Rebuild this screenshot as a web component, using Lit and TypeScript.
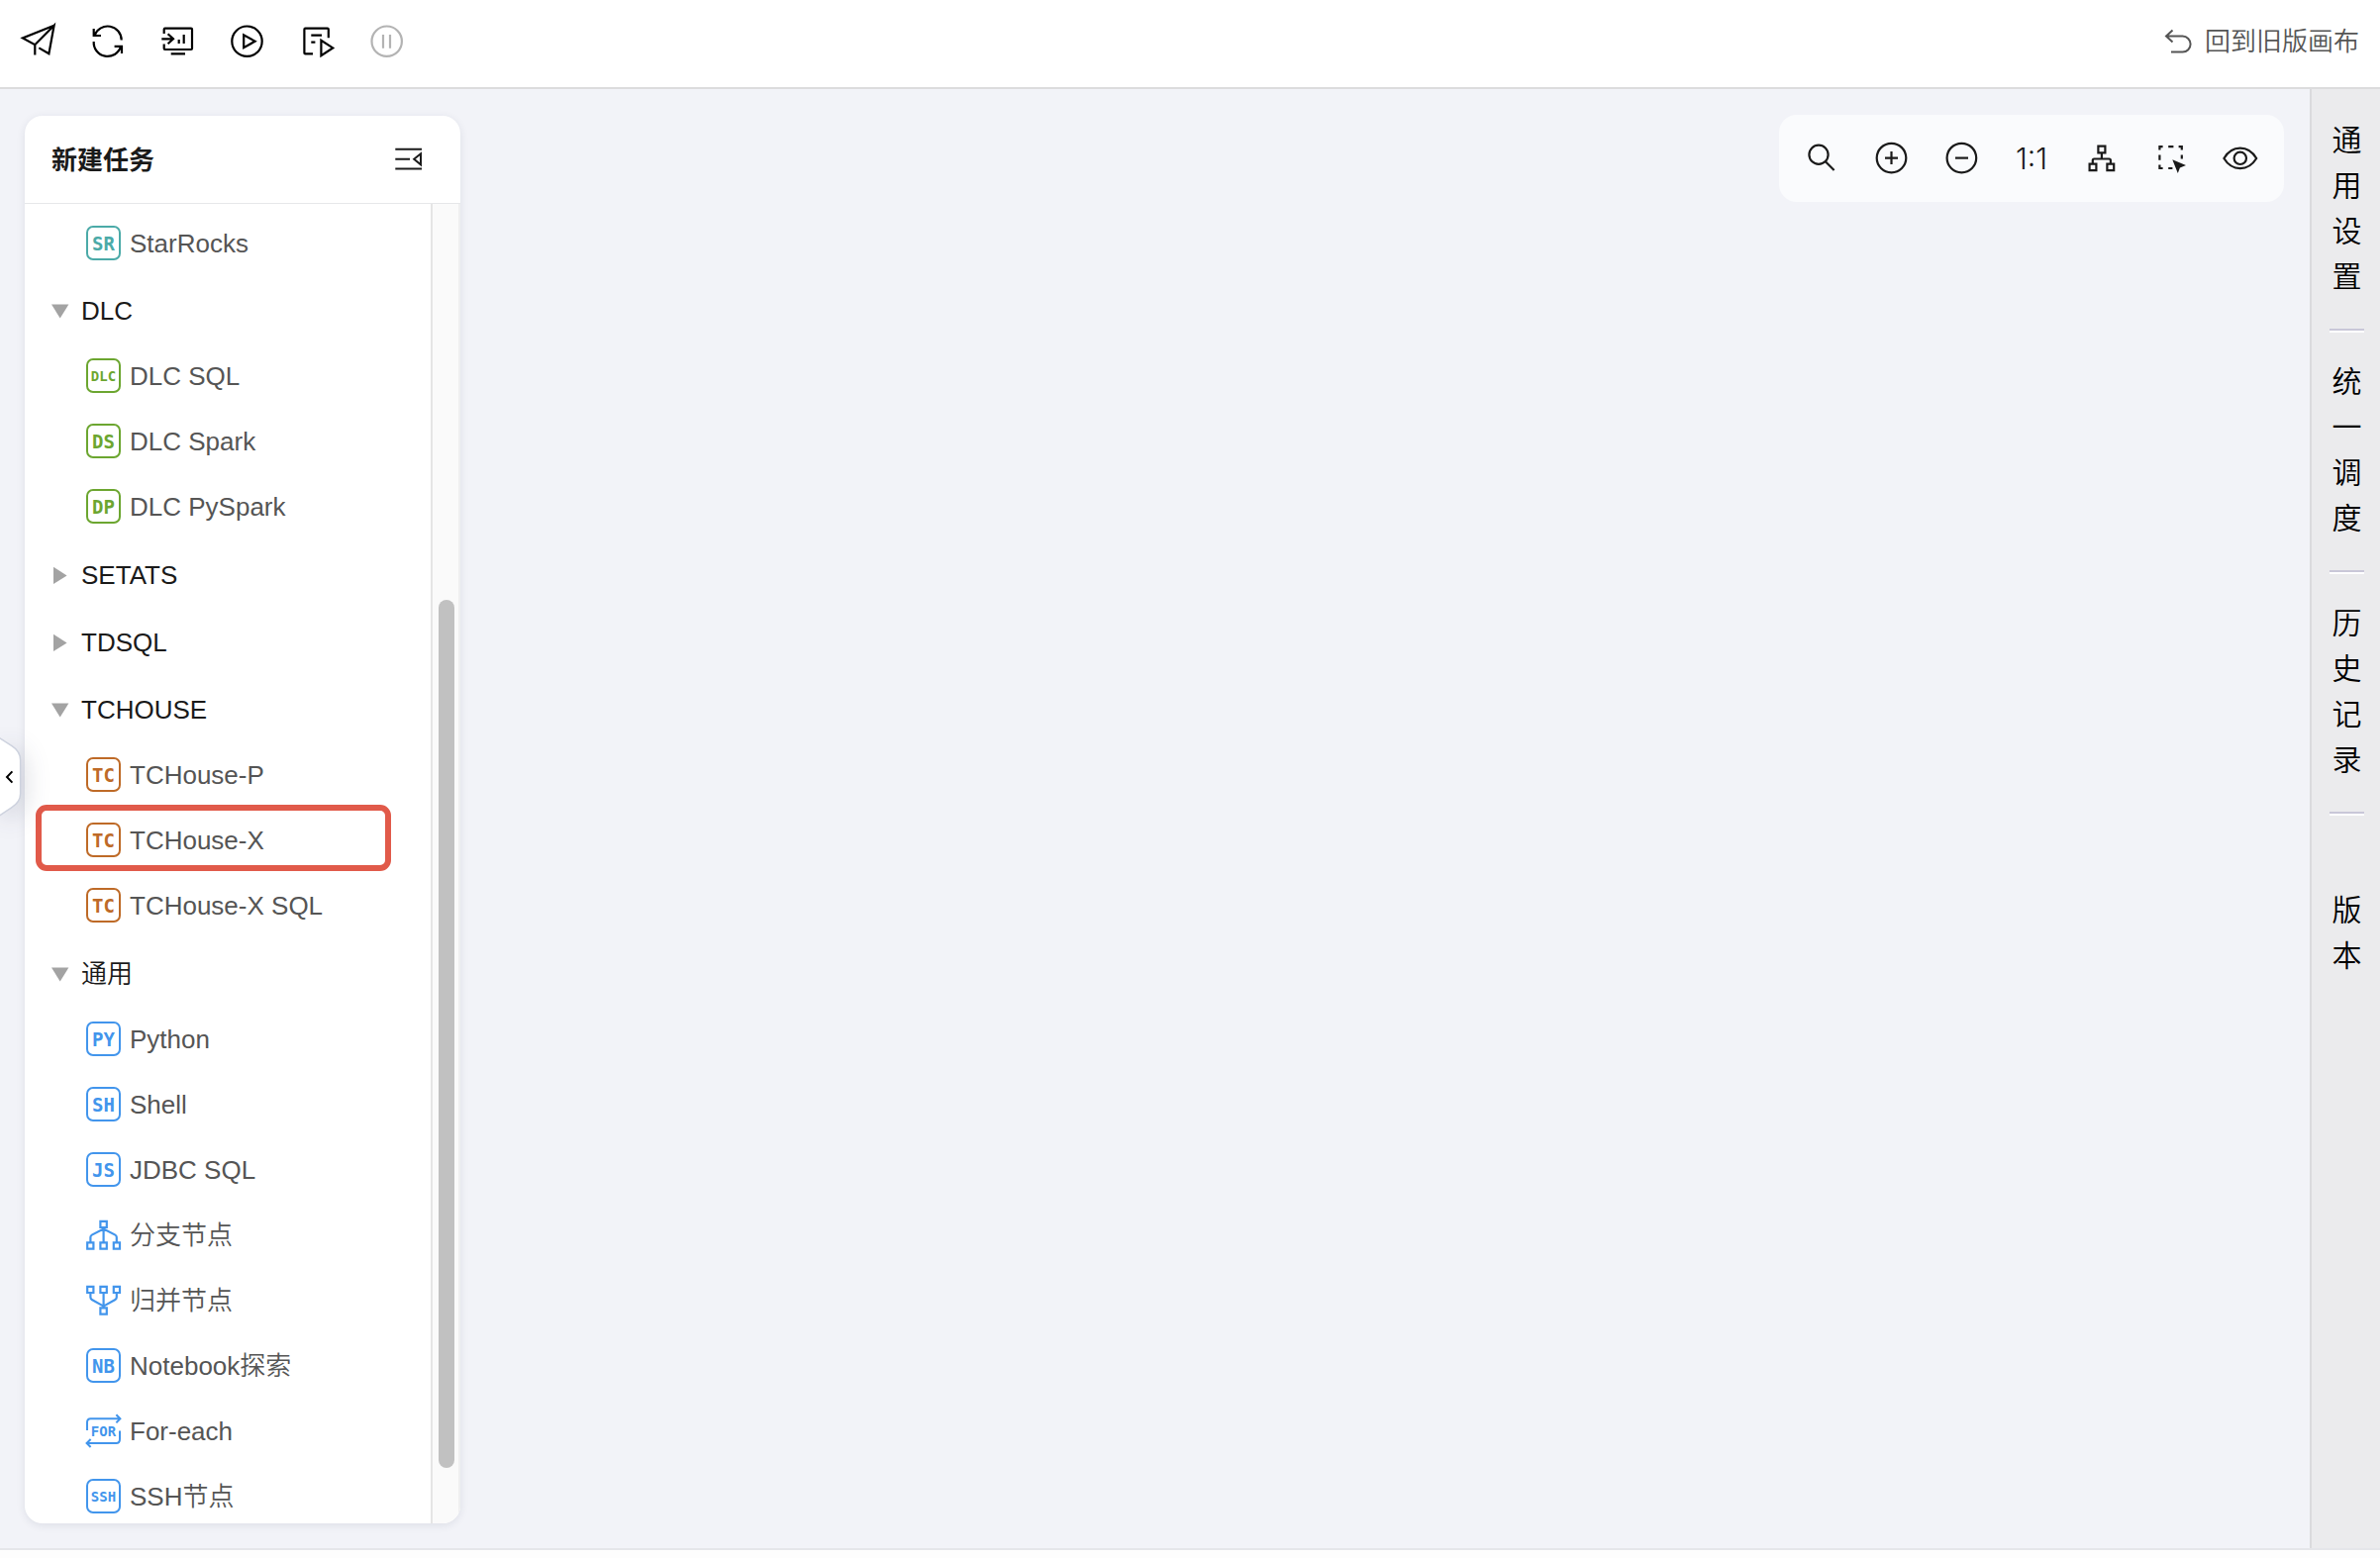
import { LitElement, html, svg, css, type TemplateResult } from "lit";
import { customElement, property, state } from "lit/decorators.js";

type Tone = "teal" | "green" | "orange" | "blue";

interface Task {
  label: string;
  tone: Tone;
  badge?: string;
  glyph?: "branch" | "merge" | "loop";
  marked?: boolean;
}

interface Group {
  label: string;
  open: boolean;
  tasks: Task[];
}

const ICONS: Record<string, TemplateResult> = {
  send: svg`<path d="M33.6 1.8 1.9 14.4 14.3 21.2 33.6 1.8 28.4 30.2 18.3 24.4M14.3 21.2V31.6"/>`,
  refresh: svg`<path d="M3.7 5V12H11M4.6 11.6A14 14 0 0 1 31.7 16.5M3.7 18A14 14 0 0 0 31 23.2M32 30V22.8H24.6"/>`,
  monitor: svg`<path d="M4.7 10V5.6Q4.7 4.7 5.6 4.7H32Q33 4.7 33 5.6V25Q33 26 32 26H5.6Q4.7 26 4.7 25V20.6M2.3 15.3H14M8.6 10.3 14 15.3 8.6 20.2M19.7 16V20M24.7 11V20M11.7 30.4H26"/>`,
  play: svg`<circle cx="18.5" cy="17.7" r="15.2"/><path d="M15.2 11.3V24.2L26.6 17.7Z"/>`,
  script: svg`<path d="M15 30.4H7.4Q6.4 30.4 6.4 29.4V5.7Q6.4 4.7 7.4 4.7H29.8Q30.8 4.7 30.8 5.7V14.3M13.3 11.7H24M13.3 18.7H17.4M23.4 16.8V32.2L35.2 24.4Z"/>`,
  pause: svg`<circle cx="19.7" cy="17.7" r="15.2"/><path d="M16 11V24.8M23 11V24.8"/>`,
  search: svg`<circle cx="16" cy="14.2" r="9.6"/><path d="M22.6 21 31.6 30"/>`,
  plus: svg`<circle cx="18.5" cy="17.6" r="14.8"/><path d="M12 17.6H25M18.5 11.1V24.1"/>`,
  minus: svg`<circle cx="18.4" cy="17.6" r="14.8"/><path d="M12 17.6H25"/>`,
  tree: svg`<path d="M14.4 5.6H21.4V12.4H14.4ZM5.6 23.6H12.4V30.2H5.6ZM23.4 23.6H30.2V30.2H23.4ZM17.9 12.4V18.5M8.8 23.6V20Q8.8 18.5 10.3 18.5H25.4Q26.9 18.5 26.9 20V23.6"/>`,
  select: svg`<path d="M5.4 9.5V6.2H8.6M14.2 6.2H19.4M24.6 6.2H27.8V9.5M5.4 14.4V19.8M5.4 24.6V28H8.6M14.2 28H18.4M27.8 14.4V18.6"/><path class="solid" d="M18.3 19.3 32 25 25.9 27.4 23.8 33Z"/>`,
  eye: svg`<path d="M-.6 18C7.5 4.2 24 4.2 32.2 18 24 31.4 7.5 31.4-.6 18Z"/><circle cx="15.8" cy="17.8" r="6.2"/>`,
};

@customElement("line-icon")
export class LineIcon extends LitElement {
  @property() name = "";

  static styles = css`
    :host {
      display: block;
      width: 36px;
      height: 36px;
    }
    .icon {
      display: block;
      width: 36px;
      height: 36px;
      overflow: visible;
      fill: none;
      stroke: currentColor;
      stroke-width: 2.2;
    }
    .solid {
      fill: currentColor;
      stroke: none;
    }
  `;

  render() {
    return html`<svg class="icon" viewBox="0 0 36 36" aria-hidden="true">${ICONS[this.name]}</svg>`;
  }
}

@customElement("task-icon")
export class TaskIcon extends LitElement {
  @property({ attribute: false }) task!: Task;

  static styles = css`
    :host {
      display: block;
      width: 36px;
      height: 36px;
    }
    .icon {
      display: block;
      overflow: visible;
      fill: none;
      stroke: currentColor;
      stroke-width: 2;
    }
    .nodes {
      stroke-width: 2.2;
    }
    .code {
      fill: currentColor;
      stroke: none;
      font-family: "DejaVu Sans Mono", monospace;
      font-weight: 700;
      font-size: 19px;
      text-anchor: middle;
    }
    .code.small {
      font-size: 14px;
    }
    .teal {
      color: #4baaa8;
    }
    .green {
      color: #6ca630;
    }
    .orange {
      color: #be6a27;
    }
    .blue {
      color: #4295ec;
    }
  `;

  private shape() {
    const { badge = "", glyph } = this.task;
    if (glyph === "branch") {
      return svg`<path class="nodes" d="M14.4 3.8H20.8V10H14.4ZM1.2 25.4H7.4V31.6H1.2ZM14.4 25.4H20.8V31.6H14.4ZM27.8 25.4H34V31.6H27.8ZM17.6 10V25.4M4.4 25.4V20Q4.4 18.4 5.8 17.6L17.6 11.6 29.4 17.6Q30.8 18.4 30.8 20V25.4"/>`;
    }
    if (glyph === "merge") {
      return svg`<path class="nodes" d="M1.2 3.8H7.4V10H1.2ZM14.4 3.8H20.8V10H14.4ZM27.8 3.8H34V10H27.8ZM14.4 25.4H20.8V31.6H14.4ZM17.6 10V25.4M4.4 10V14.6Q4.4 16.2 5.8 17L17.6 23.6 29.4 17Q30.8 16.2 30.8 14.6V10"/>`;
    }
    if (glyph === "loop") {
      return svg`<path d="M1 17V9Q1 5.3 4.6 5.3H34M30.4 1.2 34.4 5.3 30.4 9.4M34 17.4V26Q34 30 30.4 30H1M4.6 26 .6 30 4.6 34"/>
        <text class="code small" x="17.5" y="23">${badge}</text>`;
    }
    const small = badge.length > 2;
    return svg`<rect x="1" y="1" width="33" height="33" rx="6"/>
      <text class=${small ? "code small" : "code"} x="17.5" y=${small ? 23 : 25}>${badge}</text>`;
  }

  render() {
    return html`<svg class="icon ${this.task.tone}" width="36" height="36" viewBox="0 0 36 36" aria-hidden="true">
      ${this.shape()}
    </svg>`;
  }
}

@customElement("task-panel")
export class TaskPanel extends LitElement {
  @state() private groups: Group[] = [
    { label: "DLC", open: true, tasks: [
      { label: "DLC SQL", tone: "green", badge: "DLC" },
      { label: "DLC Spark", tone: "green", badge: "DS" },
      { label: "DLC PySpark", tone: "green", badge: "DP" },
    ] },
    { label: "SETATS", open: false, tasks: [] },
    { label: "TDSQL", open: false, tasks: [] },
    { label: "TCHOUSE", open: true, tasks: [
      { label: "TCHouse-P", tone: "orange", badge: "TC" },
      { label: "TCHouse-X", tone: "orange", badge: "TC", marked: true },
      { label: "TCHouse-X SQL", tone: "orange", badge: "TC" },
    ] },
    { label: "通用", open: true, tasks: [
      { label: "Python", tone: "blue", badge: "PY" },
      { label: "Shell", tone: "blue", badge: "SH" },
      { label: "JDBC SQL", tone: "blue", badge: "JS" },
      { label: "分支节点", tone: "blue", glyph: "branch" },
      { label: "归并节点", tone: "blue", glyph: "merge" },
      { label: "Notebook探索", tone: "blue", badge: "NB" },
      { label: "For-each", tone: "blue", badge: "FOR", glyph: "loop" },
      { label: "SSH节点", tone: "blue", badge: "SSH" },
    ] },
  ];

  static styles = css`
    :host {
      display: flex;
      flex-direction: column;
      width: 440px;
      background: #fff;
      border-radius: 18px;
      overflow: hidden;
      box-shadow: 0 2px 8px rgba(40, 50, 80, 0.1);
    }
    button {
      font: inherit;
      color: inherit;
      background: none;
      border: 0;
      padding: 0;
      cursor: pointer;
      text-align: left;
    }
    .head {
      display: flex;
      align-items: center;
      justify-content: space-between;
      height: 88px;
      flex: none;
      padding: 0 38px 0 27px;
      border-bottom: 1px solid #e6e7e9;
    }
    .title {
      margin: 0;
      padding-top: 2px;
      font-size: 26px;
      line-height: 36px;
      font-weight: 700;
      color: #1a1a1a;
    }
    .fold {
      display: block;
      fill: none;
      stroke: #1a1a1a;
      stroke-width: 2;
    }
    .body {
      display: flex;
      flex: 1;
      min-height: 0;
    }
    .tree {
      flex: 1;
      overflow: hidden;
      padding-top: 7px;
    }
    .list {
      list-style: none;
      margin: 0;
      padding: 0;
    }
    .group + .list {
      padding-bottom: 1px;
    }
    .item {
      position: relative;
    }
    .task {
      display: flex;
      align-items: center;
      gap: 8px;
      width: 100%;
      height: 66px;
      padding-left: 62px;
      color: #555;
    }
    .marked::after {
      content: "";
      position: absolute;
      inset: -3px 40px 2px 11px;
      border: 6px solid #e15a4a;
      border-radius: 11px;
      pointer-events: none;
    }
    .group {
      display: flex;
      align-items: center;
      gap: 12px;
      width: 100%;
      height: 68px;
      padding: 2px 0 0 27px;
      color: #1a1a1a;
    }
    .caret {
      fill: #a3a3a3;
    }
    .track {
      display: flex;
      flex-direction: column;
      align-items: center;
      width: 24px;
      padding-left: 2px;
      background: #fafafa;
      border-left: 2px solid #e5e5e5;
      border-right: 2px solid #efeff0;
    }
    .before {
      flex: 400;
    }
    .thumb {
      flex: 877;
      width: 16px;
      border-radius: 8px;
      background: #c1c1c1;
    }
    .after {
      flex: 56;
    }
  `;

  private toggle(index: number) {
    this.groups = this.groups.map((g, i) => (i === index ? { ...g, open: !g.open } : g));
  }

  private list(tasks: Task[]) {
    return html`<ul class="list">
      ${tasks.map(
        (t) => html`<li class="item ${t.marked ? "marked" : ""}">
          <button class="task"><task-icon .task=${t}></task-icon><span>${t.label}</span></button>
        </li>`,
      )}
    </ul>`;
  }

  render() {
    return html`
      <header class="head">
        <h2 class="title">新建任务</h2>
        <button aria-label="收起">
          <svg class="fold" width="28" height="24" viewBox="0 0 28 24">
            <path d="M.3 1.7H27M.3 11.8H15M.3 21.5H27M26 6.3V17.3L19.2 11.8Z" />
          </svg>
        </button>
      </header>
      <div class="body">
        <nav class="tree">
          ${this.list([{ label: "StarRocks", tone: "teal", badge: "SR" }])}
          ${this.groups.map(
            (g, i) => html`
              <button class="group" aria-expanded=${g.open} @click=${() => this.toggle(i)}>
                <svg class="caret" width="18" height="18" viewBox="0 0 18 18" aria-hidden="true">
                  <path d=${g.open ? "M0 2.4H17.4L8.7 16.6Z" : "M2 .8V18L15.6 9.4Z"} />
                </svg>
                <span>${g.label}</span>
              </button>
              ${g.open ? this.list(g.tasks) : ""}
            `,
          )}
        </nav>
        <div class="track">
          <div class="before"></div>
          <div class="thumb"></div>
          <div class="after"></div>
        </div>
      </div>
    `;
  }
}

@customElement("app-root")
export class AppRoot extends LitElement {
  static styles = css`
    :host {
      display: flex;
      flex-direction: column;
      height: 100vh;
      box-sizing: border-box;
      background: #fdfdfd;
      font-family: "Liberation Sans", "Noto Sans CJK SC", sans-serif;
      font-size: 26px;
      font-weight: 350;
      line-height: 36px;
      color: #1a1a1a;
    }
    button {
      font: inherit;
      color: inherit;
      background: none;
      border: 0;
      padding: 0;
      cursor: pointer;
    }
    .topbar {
      display: flex;
      align-items: center;
      justify-content: space-between;
      height: 84px;
      flex: none;
      padding: 0 21px 4px 21px;
      background: #fff;
      border-bottom: 2px solid #dcdcdd;
    }
    .actions {
      display: flex;
      gap: 34px;
      color: #000;
    }
    .actions button:disabled {
      color: #b3b3b3;
    }
    .back {
      display: flex;
      align-items: center;
      gap: 13px;
      color: #555;
      text-decoration: none;
    }
    .back-icon {
      fill: none;
      stroke: currentColor;
      stroke-width: 2;
    }
    .main {
      position: relative;
      display: flex;
      flex: 1;
      min-height: 0;
      background: #f2f3f8;
      border-bottom: 2px solid #e5e6ea;
      margin-bottom: 8px;
    }
    .panel {
      flex: none;
      margin: 27px 0 25px 25px;
    }
    .canvas {
      flex: 1;
      display: flex;
      justify-content: flex-end;
      align-items: flex-start;
      padding: 26px 26px 0 0;
    }
    .tools {
      display: flex;
      align-items: center;
      gap: 35px;
      height: 88px;
      padding: 0 24px;
      border-radius: 18px;
      background: #fafbfd;
    }
    .ratio {
      display: flex;
      justify-content: center;
      width: 36px;
      font-family: Inter, sans-serif;
      font-size: 30px;
      font-weight: 300;
    }
    .rail {
      flex: none;
      display: flex;
      flex-direction: column;
      width: 35px;
      padding: 2px 16px 0 18px;
      background: #ebebed;
      border-left: 2px solid #dadadd;
    }
    .tab {
      display: flex;
      justify-content: center;
      padding: 27px 0 29px;
      font-size: 30px;
      line-height: 46px;
      color: #000;
    }
    .tab-text {
      width: 30px;
      word-break: break-all;
    }
    .rule {
      height: 2px;
      background: #c9c7d8;
      border-bottom: 2px solid #fff;
    }
    .spaced {
      margin-top: 46px;
    }
    .handle {
      position: absolute;
      left: 0;
      top: 654px;
      width: 22px;
      height: 82px;
      filter: drop-shadow(4px 6px 12px rgba(30, 40, 70, 0.16));
    }
    .handle-icon {
      display: block;
    }
    .handle-shape {
      fill: #fff;
      stroke: #cdd2de;
      stroke-width: 1.5;
    }
    .handle-arrow {
      fill: none;
      stroke: #000;
      stroke-width: 2;
    }
  `;

  render() {
    const actions = [
      ["send", "提交"],
      ["refresh", "刷新"],
      ["monitor", "监控"],
      ["play", "运行"],
      ["script", "调试"],
      ["pause", "暂停"],
    ];
    const tabs = ["通用设置", "统一调度", "历史记录"];
    const tool = (name: string, label: string) =>
      html`<button aria-label=${label}><line-icon name=${name}></line-icon></button>`;

    return html`
      <header class="topbar">
        <div class="actions">
          ${actions.map(
            ([name, label]) => html`<button aria-label=${label} ?disabled=${name === "pause"}>
              <line-icon name=${name}></line-icon>
            </button>`,
          )}
        </div>
        <a class="back" href="#">
          <svg class="back-icon" width="28" height="28" viewBox="0 0 28 28" aria-hidden="true">
            <path d="M8.5 2.6 2 8.6 8.5 14.6M2 8.6H18.6A8 8 0 0 1 18.6 24.6H7" />
          </svg>
          <span>回到旧版画布</span>
        </a>
      </header>
      <main class="main">
        <task-panel class="panel"></task-panel>
        <section class="canvas">
          <div class="tools">
            ${tool("search", "搜索")} ${tool("plus", "放大")} ${tool("minus", "缩小")}
            <button class="ratio">1:1</button>
            ${tool("tree", "布局")} ${tool("select", "框选")} ${tool("eye", "预览")}
          </div>
        </section>
        <aside class="rail">
          ${tabs.map(
            (t) => html`<button class="tab"><span class="tab-text">${t}</span></button>
              <div class="rule"></div>`,
          )}
          <button class="tab spaced"><span class="tab-text">版本</span></button>
        </aside>
        <button class="handle" aria-label="展开">
          <svg class="handle-icon" width="22" height="82" viewBox="0 0 22 82">
            <path class="handle-shape" d="M-2 .6 12 9.6Q20.6 15 20.6 24V58Q20.6 66 12 71.6L-2 81Z" />
            <path class="handle-arrow" d="M12.4 35.4 7 41 12.4 46.6" />
          </svg>
        </button>
      </main>
    `;
  }
}
